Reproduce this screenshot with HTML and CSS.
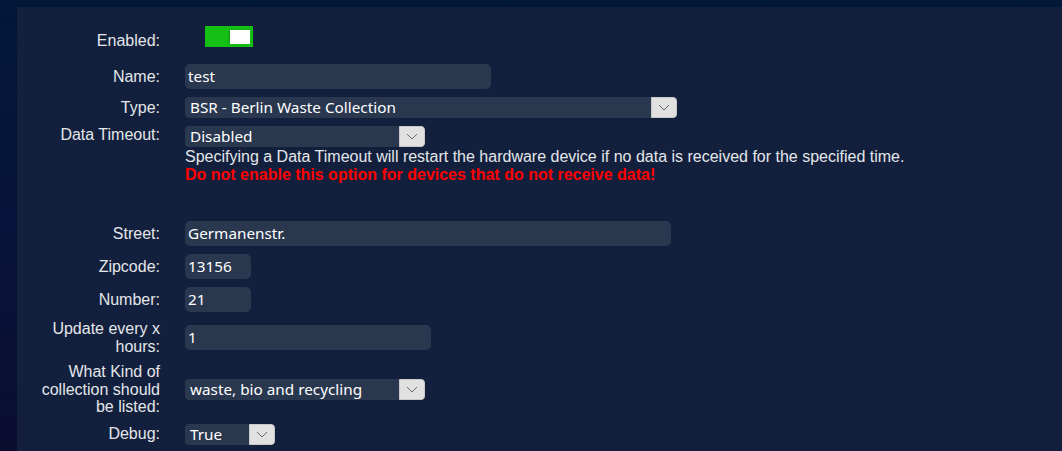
FILE: index.html
```html
<!DOCTYPE html>
<html lang="en">
<head>
<meta charset="utf-8">
<title>Device settings</title>
<link rel="stylesheet" href="styles.css">
</head>
<body>
<div class="panel">
  <div class="form">
    <div class="label">Enabled:</div>
    <div class="field toggle-row"><span class="toggle"><span class="knob"></span></span></div>

    <div class="label">Name:</div>
    <div class="field"><div class="input w-name">test</div></div>

    <div class="label">Type:</div>
    <div class="field"><div class="select w-type"><span class="value">BSR - Berlin Waste Collection</span><span class="arrow"><svg width="12" height="7" viewBox="0 0 12 7"><path d="M1 1 L6 6 L11 1" fill="none" stroke="#6a6a6a" stroke-width="1"/></svg></span></div></div>

    <div class="label top">Data Timeout:</div>
    <div class="field">
      <div class="select w-timeout"><span class="value">Disabled</span><span class="arrow"><svg width="12" height="7" viewBox="0 0 12 7"><path d="M1 1 L6 6 L11 1" fill="none" stroke="#6a6a6a" stroke-width="1"/></svg></span></div>
      <div class="help">Specifying a Data Timeout will restart the hardware device if no data is received for the specified time.</div>
      <div class="warn">Do not enable this option for devices that do not receive data!</div>
    </div>

    <div class="spacer"></div>
    <div class="spacer"></div>

    <div class="label">Street:</div>
    <div class="field"><div class="input w-street">Germanenstr.</div></div>

    <div class="label">Zipcode:</div>
    <div class="field"><div class="input w-short">13156</div></div>

    <div class="label">Number:</div>
    <div class="field"><div class="input w-short">21</div></div>

    <div class="label">Update every x hours:</div>
    <div class="field"><div class="input w-update">1</div></div>

    <div class="label">What Kind of collection should be listed:</div>
    <div class="field"><div class="select w-timeout"><span class="value">waste, bio and recycling</span><span class="arrow"><svg width="12" height="7" viewBox="0 0 12 7"><path d="M1 1 L6 6 L11 1" fill="none" stroke="#6a6a6a" stroke-width="1"/></svg></span></div></div>

    <div class="label">Debug:</div>
    <div class="field"><div class="select w-debug"><span class="value">True</span><span class="arrow"><svg width="12" height="7" viewBox="0 0 12 7"><path d="M1 1 L6 6 L11 1" fill="none" stroke="#6a6a6a" stroke-width="1"/></svg></span></div></div>
  </div>
</div>
</body>
</html>
```

FILE: styles.css
```css
html, body {
  margin: 0;
  padding: 0;
  height: 100%;
}
body {
  background: linear-gradient(to bottom, #021838 0%, #07133a 50%, #0b0d2f 100%);
  overflow: hidden;
}
.panel {
  margin: 7px 0 0 17px;
  background: #12203d;
  height: calc(100% - 7px);
  box-sizing: border-box;
  padding: 19px 0 0 21px;
}
.form {
  display: grid;
  grid-template-columns: 122px 1fr;
  column-gap: 25px;
  row-gap: 8px;
  align-items: center;
}
.label {
  font-family: "Liberation Sans", Arial, sans-serif;
  font-size: 16px;
  line-height: 17.5px;
  color: #e4e6ea;
  text-align: right;
}
.label.top {
  align-self: start;
}
.field {
  display: flex;
  flex-direction: column;
  align-items: flex-start;
}
.toggle-row {
  margin-bottom: 9px;
}
.toggle {
  display: block;
  width: 48px;
  height: 21px;
  margin-left: 20px;
  background: #15c015;
  position: relative;
}
.knob {
  position: absolute;
  right: 3px;
  top: 4px;
  width: 20px;
  height: 14px;
  background: #ffffff;
  box-shadow: -1px 0 2px rgba(0, 0, 0, 0.25);
}
.input {
  box-sizing: border-box;
  height: 25px;
  background: #29374f;
  border-radius: 5px;
  color: #ffffff;
  font-family: "Noto Sans", "Open Sans", sans-serif;
  font-size: 15.3px;
  line-height: 25px;
  padding-left: 3px;
  white-space: nowrap;
}
.w-name { width: 306px; }
.w-street { width: 486px; }
.w-short { width: 66px; }
.w-update { width: 246px; }
.select {
  box-sizing: border-box;
  height: 21px;
  display: flex;
  background: #29374f;
  border-radius: 4px;
  color: #ffffff;
  font-family: "Noto Sans", "Open Sans", sans-serif;
  font-size: 15.3px;
  line-height: 21px;
  white-space: nowrap;
}
.select .value {
  flex: 1;
  padding-left: 5px;
  overflow: hidden;
}
.select .arrow {
  width: 26px;
  height: 21px;
  box-sizing: border-box;
  background: #e1e1e1;
  border: 1px solid #c9c9c9;
  border-radius: 0 4px 4px 0;
  display: flex;
  align-items: center;
  justify-content: center;
}
.w-type { width: 492px; }
.w-timeout { width: 240px; }
.w-debug { width: 90px; }
.help {
  font-family: "Liberation Sans", Arial, sans-serif;
  font-size: 16px;
  line-height: 18px;
  color: #e4e6ea;
  margin-top: 1px;
  white-space: nowrap;
}
.warn {
  font-family: "Liberation Sans", Arial, sans-serif;
  font-size: 16px;
  line-height: 18px;
  font-weight: bold;
  color: #ff0000;
  white-space: nowrap;
}
.spacer {
  height: 21px;
}
```
